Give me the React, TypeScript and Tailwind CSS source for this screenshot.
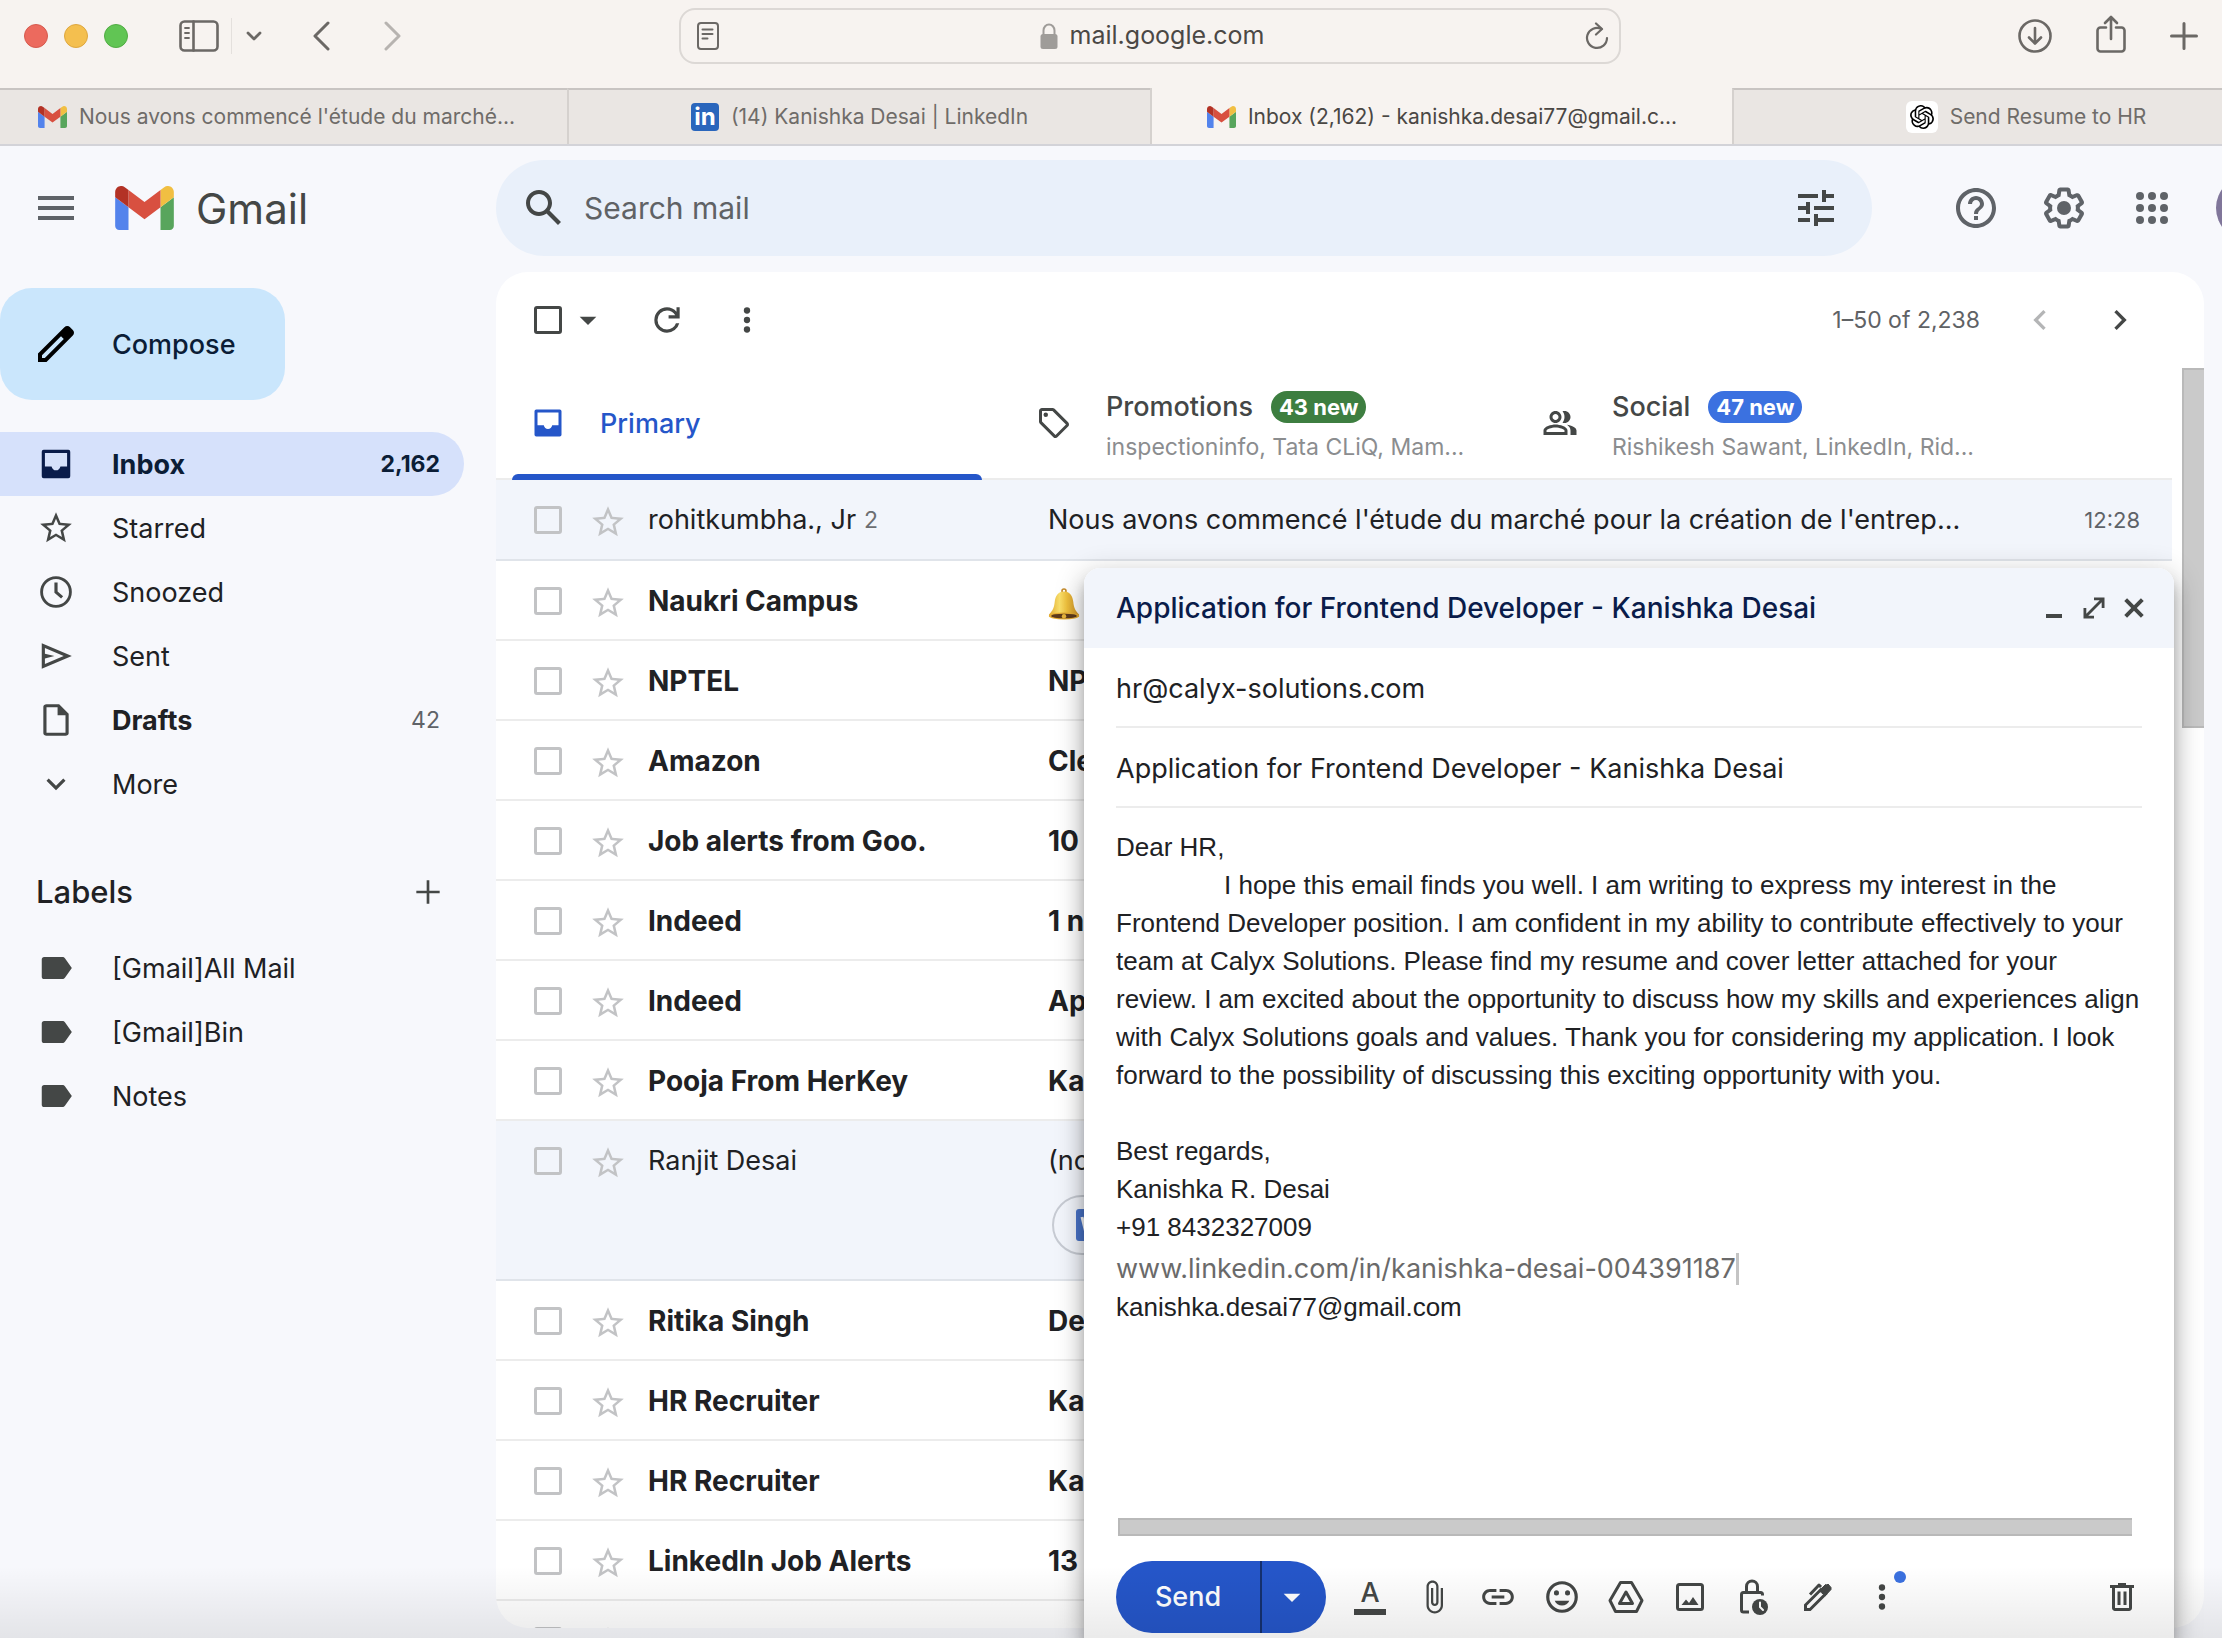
import type { ReactNode } from "react";
import { SiOpenai } from "react-icons/si";

/* ---------- icons ---------- */

function Glyph({ d, className, children }: { d?: string; className: string; children?: ReactNode }) {
  return (
    <svg viewBox="0 0 24 24" fill="currentColor" aria-hidden="true" className={`shrink-0 ${className}`}>
      {d && <path fillRule="evenodd" d={d} />}
      {children}
    </svg>
  );
}

const P = {
  menu: "M3 18h18v-2H3v2zm0-5h18v-2H3v2zm0-7v2h18V6H3z",
  search:
    "M20.49 19l-5.73-5.73C15.53 12.2 16 10.91 16 9.5 16 5.91 13.09 3 9.5 3S3 5.91 3 9.5 5.91 16 9.5 16c1.41 0 2.7-.47 3.77-1.24L19 20.49 20.49 19zM5 9.5C5 7.01 7.01 5 9.5 5S14 7.01 14 9.5 11.99 14 9.5 14 5 11.99 5 9.5z",
  tune: "M3 17v2h6v-2H3zM3 5v2h10V5H3zm10 16v-2h8v-2h-8v-2h-2v6h2zM7 9v2H3v2h4v2h2V9H7zm14 4v-2H11v2h10zm-6-4h2V7h4V5h-4V3h-2v6z",
  help: "M11 18h2v-2h-2v2zm1-16C6.48 2 2 6.48 2 12s4.48 10 10 10 10-4.48 10-10S17.52 2 12 2zm0 18c-4.41 0-8-3.59-8-8s3.59-8 8-8 8 3.59 8 8-3.59 8-8 8zm0-14c-2.21 0-4 1.79-4 4h2c0-1.1.9-2 2-2s2 .9 2 2c0 2-3 1.75-3 5h2c0-2.25 3-2.5 3-5 0-2.21-1.79-4-4-4z",
  gear: "M13.85 22.25h-3.7c-.74 0-1.36-.54-1.45-1.27l-.27-1.89c-.27-.14-.53-.29-.79-.46l-1.8.72c-.7.26-1.47-.03-1.81-.65L2.2 15.53c-.35-.66-.2-1.44.36-1.88l1.53-1.19c-.01-.15-.02-.3-.02-.46 0-.15.01-.31.02-.46l-1.52-1.19c-.59-.45-.74-1.26-.37-1.88l1.85-3.19c.34-.62 1.11-.9 1.79-.63l1.81.73c.26-.17.52-.32.78-.46l.27-1.91c.09-.7.71-1.25 1.44-1.25h3.7c.74 0 1.36.54 1.45 1.27l.27 1.89c.27.14.53.29.79.46l1.8-.72c.71-.26 1.48.03 1.82.65l1.84 3.18c.36.66.2 1.44-.36 1.88l-1.52 1.19c.01.15.02.3.02.46s-.01.31-.02.46l1.52 1.19c.56.45.72 1.23.37 1.86l-1.86 3.22c-.34.62-1.11.9-1.8.63l-1.8-.72c-.26.17-.52.32-.78.46l-.27 1.91c-.1.68-.72 1.22-1.46 1.22zm-3.23-2h2.76l.37-2.55.53-.22c.44-.18.88-.44 1.34-.78l.45-.34 2.38.96 1.38-2.4-2.03-1.58.07-.56c.03-.26.06-.51.06-.78s-.03-.53-.06-.78l-.07-.56 2.03-1.58-1.39-2.4-2.39.96-.45-.35c-.42-.32-.87-.58-1.33-.77l-.52-.22-.37-2.55h-2.76l-.37 2.55-.53.21c-.44.19-.88.44-1.34.79l-.45.33-2.38-.95-1.39 2.39 2.03 1.58-.07.56a7 7 0 0 0-.06.79c0 .26.02.53.06.78l.07.56-2.03 1.58 1.38 2.4 2.39-.96.45.35c.43.33.86.58 1.33.77l.53.22.38 2.55z",
  pencil:
    "M3 21v-4.25L16.2 3.58c.43-.4.96-.6 1.43-.58.54 0 1.05.2 1.4.6L20.4 5c.4.35.6.85.6 1.4s-.2 1-.6 1.4L7.25 21H3zm2-2h1.4l9.5-9.5-1.4-1.4L5 17.6V19z",
  inbox:
    "M4.2 3h15.6A1.2 1.2 0 0 1 21 4.2v15.6a1.2 1.2 0 0 1-1.2 1.2H4.2A1.2 1.2 0 0 1 3 19.8V4.2A1.2 1.2 0 0 1 4.2 3zM5 5v8.5h4.2c.3 1.5 1.4 2.5 2.8 2.5s2.5-1 2.8-2.5H19V5z",
  star: "M22 9.24l-7.19-.62L12 2 9.19 8.63 2 9.24l5.46 4.73L5.82 21 12 17.27 18.18 21l-1.63-7.03L22 9.24zM12 15.4l-3.76 2.27 1-4.28-3.32-2.88 4.38-.38L12 6.1l1.71 4.04 4.38.38-3.32 2.88 1 4.28L12 15.4z",
  clock:
    "M12 2a10 10 0 1 0 0 20 10 10 0 0 0 0-20zm0 1.8a8.2 8.2 0 1 1 0 16.4 8.2 8.2 0 0 1 0-16.4zM11 6v6.5l4.2 3.6 1.3-1.4-3.5-3V6z",
  sent: "M3 20V4l19 8-19 8zm2-3 11.85-5L5 7v3.5l6 1.5-6 1.5V17z",
  draft:
    "M14 2H6c-1.1 0-2 .7-2 1.6v16.8c0 .9.9 1.6 2 1.6h12c1.1 0 2-.7 2-1.6V8l-6-6zM6 20V4h7v5h5v11H6z",
  down: "M16.59 8.59L12 13.17 7.41 8.59 6 10l6 6 6-6z",
  label:
    "M17.63 5.84C17.27 5.33 16.67 5 16 5L4.5 5C3.6 5 3 5.6 3 6.5v11c0 .9.6 1.5 1.5 1.5L16 19c.67 0 1.27-.33 1.63-.84L22 12l-4.37-6.16z",
  add: "M19 12.8h-6.2V19h-1.6v-6.2H5v-1.6h6.2V5h1.6v6.2H19z",
  refresh:
    "M12 20q-3.35 0-5.675-2.325T4 12t2.325-5.675T12 4q1.725 0 3.3.713T18 6.75V4h2v7h-7V9h4.2q-.8-1.4-2.187-2.2T12 6Q9.5 6 7.75 7.75T6 12t1.75 4.25T12 18q1.925 0 3.475-1.1T17.65 14h2.1q-.7 2.65-2.85 4.325T12 20z",
  left: "M15.41 7.41L14 6l-6 6 6 6 1.41-1.41L10.83 12z",
  right: "M10 6L8.59 7.41 13.17 12l-4.58 4.59L10 18l6-6z",
  caret: "M7 10l5 5 5-5z",
  tag: "M21.41 11.58l-9-9C12.05 2.22 11.55 2 11 2H4c-1.1 0-2 .9-2 2v7c0 .55.22 1.05.59 1.42l9 9c.36.36.86.58 1.41.58s1.05-.22 1.41-.59l7-7c.37-.36.59-.86.59-1.41s-.23-1.06-.59-1.42zM13 20.01L4 11V4h7l9 8.99-7 7.02z",
  people:
    "M16.67 13.13C18.04 14.06 19 15.32 19 17v3h4v-3c0-2.18-3.57-3.47-6.33-3.87zM15 12c2.21 0 4-1.79 4-4s-1.79-4-4-4c-.47 0-.91.1-1.33.24C14.5 5.27 15 6.58 15 8s-.5 2.73-1.33 3.76c.42.14.86.24 1.33.24zM9 12c2.21 0 4-1.79 4-4s-1.79-4-4-4-4 1.79-4 4 1.79 4 4 4zm0-6c1.1 0 2 .9 2 2s-.9 2-2 2-2-.9-2-2 .9-2 2-2zM9 13c-2.67 0-8 1.34-8 4v3h16v-3c0-2.66-5.33-4-8-4zm6 5H3v-.99C3.2 16.29 6.3 15 9 15s5.8 1.29 6 2v1z",
  expand: "M3 21v-9h2.4v4.9L16.9 5.4H12V3h9v9h-2.4V7.1L7.1 18.6H12V21z",
  close: "M19.3 6.8 17.2 4.7 12 9.9 6.8 4.7 4.7 6.8 9.9 12 4.7 17.2 6.8 19.3 12 14.1 17.2 19.3 19.3 17.2 14.1 12z",
  clip: "M16.5 6v11.5c0 2.21-1.79 4-4 4s-4-1.79-4-4V5c0-1.38 1.12-2.5 2.5-2.5s2.5 1.12 2.5 2.5v10.5c0 .55-.45 1-1 1s-1-.45-1-1V6H10v9.5c0 1.38 1.12 2.5 2.5 2.5s2.5-1.12 2.5-2.5V5c0-2.21-1.79-4-4-4S7 2.79 7 5v12.5c0 3.04 2.46 5.5 5.5 5.5s5.5-2.46 5.5-5.5V6h-1.5z",
  link: "M3.9 12c0-1.71 1.39-3.1 3.1-3.1h4V7H7c-2.76 0-5 2.24-5 5s2.24 5 5 5h4v-1.9H7c-1.71 0-3.1-1.39-3.1-3.1zM8 13h8v-2H8v2zm9-6h-4v1.9h4c1.71 0 3.1 1.39 3.1 3.1s-1.39 3.1-3.1 3.1h-4V17h4c2.76 0 5-2.24 5-5s-2.24-5-5-5z",
  smile:
    "M12 2a10 10 0 1 0 0 20 10 10 0 0 0 0-20zm0 2a8 8 0 1 1 0 16 8 8 0 0 1 0-16zM12 17.3c2.1 0 3.9-1.2 4.6-3H7.4c.7 1.8 2.5 3 4.6 3zM8.5 7.8a1.6 1.6 0 1 0 0 3.2 1.6 1.6 0 0 0 0-3.2zM15.5 7.8a1.6 1.6 0 1 0 0 3.2 1.6 1.6 0 0 0 0-3.2z",
};

function MoreDots({ className }: { className: string }) {
  return (
    <Glyph className={className}>
      <circle cx="12" cy="6" r="2" />
      <circle cx="12" cy="12" r="2" />
      <circle cx="12" cy="18" r="2" />
    </Glyph>
  );
}

function GmailLogo({ className }: { className: string }) {
  return (
    <svg viewBox="52 42 88 66" aria-hidden="true" className={`shrink-0 ${className}`}>
      <path fill="#5383ec" d="M58 108h14V74L52 59v43c0 3.32 2.69 6 6 6" />
      <path fill="#58a55c" d="M120 108h14c3.32 0 6-2.69 6-6V59l-20 15" />
      <path fill="#f1bf42" d="M120 48v26l20-15v-8c0-7.42-8.47-11.65-14.4-7.2" />
      <path fill="#d85040" d="M72 74V48l24 18 24-18v26L96 92" />
      <path fill="#b33225" d="M52 51v8l20 15V48l-5.6-4.2c-5.94-4.45-14.4-.22-14.4 7.2" />
    </svg>
  );
}

function Line({ box, className, children, width = 2.6 }: { box: string; className: string; children: ReactNode; width?: number }) {
  return (
    <svg
      viewBox={box}
      fill="none"
      stroke="currentColor"
      strokeWidth={width}
      strokeLinecap="round"
      strokeLinejoin="round"
      aria-hidden="true"
      className={`shrink-0 ${className}`}
    >
      {children}
    </svg>
  );
}

function Bell() {
  return (
    <svg viewBox="0 0 32 32" aria-label="bell" className="mt-1.5 size-8">
      <defs>
        <linearGradient id="bell" x1="0" x2="1">
          <stop offset="0" stopColor="#e0a92f" />
          <stop offset="0.35" stopColor="#f9df6b" />
          <stop offset="0.6" stopColor="#efc03d" />
          <stop offset="1" stopColor="#cf9429" />
        </linearGradient>
      </defs>
      <circle cx="16" cy="3" r="2" fill="none" stroke="#c48a2a" strokeWidth="1.6" />
      <path d="M16 3.5c6 0 8.6 4.5 9.3 10.5.6 5.4 1.7 8.5 5.7 12.5v2H1v-2C5 22.5 6.1 19.4 6.7 14 7.4 8 10 3.5 16 3.5z" fill="url(#bell)" />
      <ellipse cx="16" cy="28" rx="15.2" ry="3.4" fill="#e6ae35" />
      <ellipse cx="16" cy="28" rx="12.8" ry="2.3" fill="#5d3b1c" />
      <circle cx="16" cy="28.2" r="2.2" fill="#e7b53c" />
    </svg>
  );
}

/* ---------- browser chrome ---------- */

function BrowserBar() {
  return (
    <div className="grid h-[88px] shrink-0 grid-cols-[679fr_942px_601fr] items-start bg-[#f7f3f0] text-[#6b6865]">
      <div className="flex items-center pl-6 pt-2">
        <div className="flex h-14 items-center gap-4">
          <span className="size-6 rounded-full border border-[#d65a4e] bg-[#ec6a5e]" />
          <span className="size-6 rounded-full border border-[#dea73f] bg-[#f4bf4f]" />
          <span className="size-6 rounded-full border border-[#51ac43] bg-[#61c554]" />
        </div>
        <button aria-label="Sidebar" className="ml-[51px]">
          <Line box="0 0 40 32" className="h-8 w-10">
            <rect x="1.5" y="1.5" width="37" height="29" rx="4" />
            <path d="M14.5 1.5v29" />
            <path d="M6 8h4M6 13h4M6 18h4" strokeWidth="1.8" />
          </Line>
        </button>
        <span className="ml-3 h-9 w-px bg-[#e4e0dd]" />
        <button aria-label="Tab groups" className="ml-3.5">
          <Line box="0 0 16 10" className="h-2.5 w-4" width={2.8}>
            <path d="M2 2l6 6 6-6" />
          </Line>
        </button>
        <button aria-label="Back" className="ml-[50px]">
          <Line box="0 0 18 30" className="h-[30px] w-[18px]" width={3}>
            <path d="M16 2L3 15l13 13" />
          </Line>
        </button>
        <button aria-label="Forward" className="ml-[54px] text-[#b7b3b0]">
          <Line box="0 0 18 30" className="h-[30px] w-[18px]" width={3}>
            <path d="M2 2l13 13L2 28" />
          </Line>
        </button>
      </div>
      <div className="mt-2 flex h-14 items-center rounded-2xl border-2 border-[#dcd8d5] pl-4 pr-2.5">
        <Line box="0 0 22 28" className="h-7 w-[22px]" width={2}>
          <rect x="1" y="1" width="20" height="26" rx="3" />
          <path d="M5.5 7.5h10M5.5 12h10M5.5 16.5h5" />
        </Line>
        <div className="flex flex-1 items-center justify-center gap-3">
          <svg viewBox="0 0 18 26" className="h-[26px] w-[18px]" aria-hidden="true">
            <path d="M3.5 13V7.5a5.5 6 0 0 1 11 0V13" fill="none" stroke="#9f9c99" strokeWidth="2" />
            <rect x="0.5" y="11" width="17" height="15" rx="2.5" fill="#9f9c99" />
          </svg>
          <span className="text-[25px] text-[#4b4845]">mail.google.com</span>
        </div>
        <button aria-label="Reload">
          <Line box="0 0 24 28" className="h-7 w-6" width={2.2}>
            <path d="M16.5 7A10 10 0 1 0 22 16" />
            <path d="M11 1.5l6 5.5-6 5.5" />
          </Line>
        </button>
      </div>
      <div className="flex h-16 items-center justify-end gap-11 pr-6 pt-2">
        <button aria-label="Downloads">
          <Line box="0 0 34 34" className="size-[34px]">
            <circle cx="17" cy="17" r="15.5" />
            <path d="M17 9v15M11 18.5l6 6 6-6" />
          </Line>
        </button>
        <button aria-label="Share" className="pb-1">
          <Line box="0 0 30 38" className="h-[38px] w-[30px]">
            <path d="M10 12.5H4.5a3 3 0 0 0-3 3v18a3 3 0 0 0 3 3h21a3 3 0 0 0 3-3v-18a3 3 0 0 0-3-3H20" />
            <path d="M15 24V2M9 8l6-6 6 6" />
          </Line>
        </button>
        <button aria-label="New tab">
          <Line box="0 0 28 28" className="size-7" width={3}>
            <path d="M14 1.5v25M1.5 14h25" />
          </Line>
        </button>
      </div>
    </div>
  );
}

function BrowserTab({ icon, title, active, className }: { icon: ReactNode; title: string; active?: boolean; className?: string }) {
  return (
    <button
      role="tab"
      aria-selected={!!active}
      className={`flex items-center justify-center gap-3 whitespace-nowrap border-l-2 border-[#d5d1ce] text-[21px] ${
        active ? "bg-[#f7f3f0] pt-0.5 text-[#4a4744]" : "border-t-2 border-t-[#c8c4c2] bg-[#eae6e3] text-[#6f6c69]"
      } ${className ?? ""}`}
    >
      {icon}
      {title}
    </button>
  );
}

function TabStrip() {
  return (
    <div role="tablist" className="grid h-[58px] shrink-0 grid-cols-[567fr_583fr_582fr_490fr] overflow-hidden border-b-2 border-[#d3d3d8]">
      <BrowserTab className="-ml-4" icon={<GmailLogo className="h-[22px] w-[29px]" />} title="Nous avons commencé l'étude du marché..." />
      <BrowserTab
        icon={
          <span className="flex size-7 items-center justify-center rounded-sm bg-[#2a66bc] text-2xl leading-none font-bold text-white">in</span>
        }
        title="(14) Kanishka Desai | LinkedIn"
      />
      <BrowserTab active icon={<GmailLogo className="h-[22px] w-[29px]" />} title="Inbox (2,162) - kanishka.desai77@gmail.c..." />
      <BrowserTab
        className="-mr-24"
        icon={
          <span className="flex size-8 items-center justify-center rounded-md bg-white text-black">
            <SiOpenai className="size-6" />
          </span>
        }
        title="Send Resume to HR"
      />
    </div>
  );
}

/* ---------- Gmail ---------- */

function Header() {
  return (
    <header className="flex h-[126px] shrink-0 items-start overflow-hidden pt-3.5 text-[#5f6368]">
      <div className="flex h-24 w-[496px] shrink-0 items-center pl-8">
        <button aria-label="Main menu">
          <Glyph d={P.menu} className="size-12" />
        </button>
        <a href="#home" className="ml-[35px] flex items-center gap-[22px] text-[42px] text-[#444746]">
          <GmailLogo className="h-11 w-[59px]" />
          Gmail
        </a>
      </div>
      <form role="search" className="flex h-24 flex-1 items-center rounded-full bg-[#e9f0fa] pl-6 pr-8 text-[#444746]">
        <button type="button" aria-label="Search">
          <Glyph d={P.search} className="size-12" />
        </button>
        <input
          type="text"
          aria-label="Search mail"
          placeholder="Search mail"
          className="ml-4 min-w-0 flex-1 bg-transparent text-[30px] outline-none placeholder:text-[#5f6265]"
        />
        <button type="button" aria-label="Search options">
          <Glyph d={P.tune} className="size-12" />
        </button>
      </form>
      <div className="flex h-24 w-[350px] shrink-0 items-center gap-10 pl-20">
        <button aria-label="Support">
          <Glyph d={P.help} className="size-12" />
        </button>
        <button aria-label="Settings">
          <Glyph d={P.gear} className="size-12">
            <circle cx="12" cy="12" r="3.5" />
          </Glyph>
        </button>
        <button aria-label="Google apps">
          <Glyph className="size-12">
            {[6, 12, 18].map((y) => [6, 12, 18].map((x) => <circle key={`${x}-${y}`} cx={x} cy={y} r="2" />))}
          </Glyph>
        </button>
        <button aria-label="Account" className="size-16 shrink-0 rounded-full bg-[#80769a]" />
      </div>
    </header>
  );
}

function NavItem({ icon, name, count, kind }: { icon: string; name: string; count?: string; kind?: "active" | "bold" }) {
  const tone =
    kind === "active"
      ? "bg-[#d6e1fb] text-[#0b1d36] font-bold text-[27px]"
      : kind === "bold"
        ? "font-bold text-[#202124] text-[27px]"
        : "text-[#202124] text-[27px]";
  return (
    <a href={`#${name}`} aria-current={kind === "active" ? "page" : undefined} className={`flex h-16 items-center rounded-r-full pl-[37px] pr-6 ${tone}`}>
      <Glyph d={icon} className={`size-[38px] ${kind === "active" ? "text-[#0a1c4a]" : "text-[#444746]"}`} />
      <span className="ml-[37px] flex-1 pt-0.5">{name}</span>
      {count && <span className={kind === "active" ? "text-[23px]" : "text-[23px] font-normal text-[#5f6368]"}>{count}</span>}
    </a>
  );
}

function Sidebar() {
  return (
    <nav className="w-[496px] shrink-0 pr-8 pt-4">
      <button className="flex h-28 w-[285px] items-center rounded-[32px] bg-[#cae6fc] pl-8 text-[27px] font-medium text-[#0b1d36]">
        <Glyph d={P.pencil} className="size-12 text-black" />
        <span className="ml-8 pt-0.5">Compose</span>
      </button>
      <div className="mt-8">
        <NavItem icon={P.inbox} name="Inbox" count="2,162" kind="active" />
        <NavItem icon={P.star} name="Starred" />
        <NavItem icon={P.clock} name="Snoozed" />
        <NavItem icon={P.sent} name="Sent" />
        <NavItem icon={P.draft} name="Drafts" count="42" kind="bold" />
        <NavItem icon={P.down} name="More" />
      </div>
      <div className="mt-8 flex h-[88px] items-center justify-between pl-9 pr-4">
        <h2 className="text-[31px] font-medium text-[#202124]">Labels</h2>
        <button aria-label="Create new label" className="text-[#444746]">
          <Glyph d={P.add} className="size-10" />
        </button>
      </div>
      <NavItem icon={P.label} name="[Gmail]All Mail" />
      <NavItem icon={P.label} name="[Gmail]Bin" />
      <NavItem icon={P.label} name="Notes" />
    </nav>
  );
}

function ListToolbar() {
  return (
    <div className="flex h-24 shrink-0 items-center pl-[38px] pr-16 text-[#444746]">
      <input type="checkbox" aria-label="Select all" className="size-7 appearance-none rounded-[3px] border-3 border-[#444746]" />
      <button aria-label="Select menu" className="ml-1.5">
        <Glyph d={P.caret} className="size-10" />
      </button>
      <button aria-label="Refresh" className="ml-10">
        <Glyph d={P.refresh} className="size-[38px]" />
      </button>
      <button aria-label="More" className="ml-[42px]">
        <MoreDots className="size-[38px]" />
      </button>
      <span className="ml-auto text-[23px] text-[#5f6265]">1–50 of 2,238</span>
      <button aria-label="Newer" disabled className="ml-10 text-[#b4b5b6]">
        <Glyph d={P.left} className="size-10" />
      </button>
      <button aria-label="Older" className="ml-10">
        <Glyph d={P.right} className="size-10" />
      </button>
    </div>
  );
}

function CategoryTab({ icon, name, badge, tone, senders }: { icon: ReactNode; name: string; badge: string; tone: string; senders: string }) {
  return (
    <button role="tab" aria-selected="false" className="flex h-full w-[506px] items-center pl-9 text-left text-[#444746]">
      {icon}
      <span className="ml-9 pt-2">
        <span className="flex h-10 items-center gap-[18px] text-[27px] font-medium">
          {name}
          <span className={`flex h-8 items-center rounded-full px-2 text-[22px] font-bold text-white ${tone}`}>{badge}</span>
        </span>
        <span className="block text-[23px] leading-10 text-[#8b8d8f]">{senders}</span>
      </span>
    </button>
  );
}

type Mail = { from: string; subject: ReactNode; read?: boolean; count?: string; time?: string; attachment?: boolean };

const mails: Mail[] = [
  { from: "rohitkumbha., Jr", count: "2", subject: "Nous avons commencé l'étude du marché pour la création de l'entrep...", read: true, time: "12:28" },
  { from: "Naukri Campus", subject: <Bell /> },
  { from: "NPTEL", subject: "NP" },
  { from: "Amazon", subject: "Cle" },
  { from: "Job alerts from Goo.", subject: "10" },
  { from: "Indeed", subject: "1 n" },
  { from: "Indeed", subject: "Ap" },
  { from: "Pooja From HerKey", subject: "Ka" },
  { from: "Ranjit Desai", subject: "(no", read: true, attachment: true },
  { from: "Ritika Singh", subject: "De" },
  { from: "HR Recruiter", subject: "Ka" },
  { from: "HR Recruiter", subject: "Ka" },
  { from: "LinkedIn Job Alerts", subject: "13" },
  { from: "", subject: "" },
];

function MailRow({ mail }: { mail: Mail }) {
  const text = mail.read ? "text-[27px]" : "text-[28px] font-bold";
  return (
    <tr className={`border-b-2 align-top ${mail.attachment ? "h-40" : "h-20"} ${mail.read ? "border-[#e0e4ea] bg-[#f2f5fb]" : "border-[#ececec]"}`}>
      <td className="p-0">
        <div className="flex h-[78px] items-center pl-[38px] pt-0.5">
          <input type="checkbox" aria-label={`Select ${mail.from}`} className="size-7 appearance-none rounded-[3px] border-3 border-[#c2c3c5]" />
          <button aria-label="Star" className="ml-[27px] pt-1 text-[#c2c3c5]">
            <Glyph d={P.star} className="size-[38px]" />
          </button>
        </div>
      </td>
      <td className={`p-0 ${text}`}>
        <div className="flex h-[78px] items-center gap-2 whitespace-nowrap pt-0.5">
          {mail.from}
          {mail.count && <span className="text-[23px] text-[#6c6e71]">{mail.count}</span>}
        </div>
      </td>
      <td className={`overflow-hidden p-0 ${text}`}>
        <div className="flex h-[78px] items-center whitespace-nowrap pt-0.5">{mail.subject}</div>
        {mail.attachment && (
          <div className="ml-1 -mt-1 flex h-[60px] w-64 items-center rounded-full border-2 border-[#c7cbd3] pl-[22px]">
            <svg viewBox="0 0 32 32" className="size-8" aria-label="Word document">
              <rect width="32" height="32" rx="3" fill="#4a74c9" />
              <path d="M6 8l4 16 6-13 6 13 4-16" fill="none" stroke="#fff" strokeWidth="3" />
            </svg>
          </div>
        )}
      </td>
      <td className="p-0 pr-8">
        <div className="flex h-[78px] items-center justify-end pt-0.5 text-[22px] text-[#5f6368]">{mail.time}</div>
      </td>
    </tr>
  );
}

function MailPanel() {
  return (
    <main className="mb-2.5 mr-[18px] flex min-w-0 flex-1 flex-col overflow-hidden rounded-[32px] bg-white">
      <ListToolbar />
      <div className="flex min-h-0 flex-1">
        <div className="min-w-0 flex-1 overflow-hidden">
          <div role="tablist" className="flex h-28 items-center border-b-2 border-[#ececec]">
            <button role="tab" aria-selected="true" className="relative flex h-[110px] w-[506px] items-center pl-9 text-[27px] font-medium text-[#2556c9]">
              <Glyph d={P.inbox} className="-mx-0.5 size-9" />
              <span className="ml-9 pt-0.5">Primary</span>
              <span className="absolute -bottom-0.5 left-4 right-5 h-1.5 rounded-t-md bg-[#2556c9]" />
            </button>
            <CategoryTab
              icon={
                <Glyph d={P.tag} className="-mx-0.5 size-9">
                  <circle cx="6.5" cy="6.5" r="1.5" />
                </Glyph>
              }
              name="Promotions"
              badge="43 new"
              tone="bg-[#3d7e40]"
              senders="inspectioninfo, Tata CLiQ, Mam..."
            />
            <CategoryTab
              icon={<Glyph d={P.people} className="-mx-0.5 size-9" />}
              name="Social"
              badge="47 new"
              tone="bg-[#3b71e0]"
              senders="Rishikesh Sawant, LinkedIn, Rid..."
            />
          </div>
          <table className="w-full table-fixed border-collapse text-[#202124]">
            <colgroup>
              <col className="w-[152px]" />
              <col className="w-[400px]" />
              <col />
              <col className="w-40" />
            </colgroup>
            <tbody>
              {mails.map((mail, i) => (
                <MailRow key={i} mail={mail} />
              ))}
            </tbody>
          </table>
        </div>
        <div className="w-8 shrink-0 pl-2.5">
          <div className="h-[360px] border-2 border-r-0 border-[#b9b9b9] bg-[#cacaca]" />
        </div>
      </div>
    </main>
  );
}

function Tool({ label, children }: { label: string; children: ReactNode }) {
  return (
    <button aria-label={label} className="relative flex h-16 w-16 items-center justify-center">
      {children}
    </button>
  );
}

function ComposeWindow() {
  return (
    <section
      aria-label="New message"
      className="absolute bottom-0 right-12 top-[296px] flex w-[1090px] flex-col rounded-t-2xl bg-white shadow-[0_16px_20px_2px_rgba(0,0,0,0.14),0_6px_28px_4px_rgba(0,0,0,0.16),0_10px_12px_-2px_rgba(0,0,0,0.2)]"
    >
      <header className="flex h-20 shrink-0 items-center rounded-t-2xl bg-[#f2f5fb] pl-8 pr-5 text-[#444746]">
        <h2 className="flex-1 text-[28px] font-medium text-[#0a1c4a]">Application for Frontend Developer - Kanishka Desai</h2>
        <button aria-label="Minimise" className="flex size-10 items-end justify-center pb-2.5">
          <span className="h-1 w-4 bg-[#444746]" />
        </button>
        <button aria-label="Full screen" className="flex size-10 items-center justify-center">
          <Glyph d={P.expand} className="size-7" />
        </button>
        <button aria-label="Close" className="flex size-10 items-center justify-center">
          <Glyph d={P.close} className="size-8" />
        </button>
      </header>
      <div className="flex min-h-0 flex-1 flex-col px-8 text-[#202124]">
        <input
          aria-label="To"
          type="text"
          defaultValue="hr@calyx-solutions.com"
          className="h-20 shrink-0 border-b-2 border-[#ececec] pt-0.5 text-[27px] outline-none"
        />
        <input
          aria-label="Subject"
          type="text"
          defaultValue="Application for Frontend Developer - Kanishka Desai"
          className="h-20 shrink-0 border-b-2 border-[#ececec] pt-0.5 text-[27px] outline-none"
        />
        <div
          role="textbox"
          aria-multiline="true"
          aria-label="Message body"
          contentEditable
          suppressContentEditableWarning
          spellCheck={false}
          className="min-h-0 flex-1 overflow-hidden pt-5 font-['Liberation_Sans',Arial,sans-serif] text-[26px] leading-[38px] outline-none"
        >
          <p>Dear HR,</p>
          <p className="indent-[108px]">
            I hope this email finds you well. I am writing to express my interest in the Frontend Developer position. I am confident in my
            ability to contribute effectively to your team at Calyx Solutions. Please find my resume and cover letter attached for your
            review. I am excited about the opportunity to discuss how my skills and experiences align with Calyx Solutions goals and values.
            Thank you for considering my application. I look forward to the possibility of discussing this exciting opportunity with you.
          </p>
          <p className="mt-[38px]">Best regards,</p>
          <p>Kanishka R. Desai</p>
          <p>+91 8432327009</p>
          <p className="flex h-[42px] items-center pt-1 font-['Inter',sans-serif] text-[27px] text-[#6a6a6a]">
            www.linkedin.com/in/kanishka-desai-004391187
            <span className="h-8 w-[3px] bg-[#c4c4c4]" />
          </p>
          <p>kanishka.desai77@gmail.com</p>
        </div>
        <div className="ml-0.5 mr-2.5 h-[18px] shrink-0 border-2 border-r-0 border-[#b9b9b9] bg-[#cacaca]" />
      </div>
      <footer className="flex h-[102px] shrink-0 items-center pb-[5px] pl-8 pr-5 pt-[25px] text-[#444746]">
        <div className="flex h-[72px] shrink-0 overflow-hidden rounded-full bg-[#2556c9] text-white">
          <button className="w-[146px] border-r-2 border-[#14306e] text-[27px] font-medium">Send</button>
          <button aria-label="More send options" className="flex w-16 items-center pl-2.5">
            <Glyph d={P.caret} className="size-10" />
          </button>
        </div>
        <div className="ml-3 flex flex-1 items-center">
          <Tool label="Formatting options">
            <span className="flex h-9 w-8 flex-col items-center justify-between border-b-6 border-[#444746] text-[27px] leading-7 font-medium">A</span>
          </Tool>
          <Tool label="Attach files">
            <Glyph d={P.clip} className="size-9" />
          </Tool>
          <Tool label="Insert link">
            <Glyph d={P.link} className="size-[38px]" />
          </Tool>
          <Tool label="Insert emoji">
            <Glyph d={P.smile} className="size-[38px]" />
          </Tool>
          <Tool label="Insert files using Drive">
            <Line box="0 0 36 32" className="h-8 w-9" width={3}>
              <path d="M12.5 1.5h11L34 19.5l-5.5 11h-21L2 19.5z" />
              <path d="M18 11l6.5 11.5h-13z" />
            </Line>
          </Tool>
          <Tool label="Insert photo">
            <Line box="0 0 28 28" className="size-7" width={3}>
              <rect x="1.5" y="1.5" width="25" height="25" rx="2" />
              <path d="M5.5 22l4.5-5.5 3 3.5 4-6 5.5 8z" fill="currentColor" stroke="none" />
            </Line>
          </Tool>
          <Tool label="Confidential mode">
            <Line box="0 0 28 36" className="h-9 w-7" width={3}>
              <path d="M6.5 13V7.5a5.5 5.5 0 0 1 11 0V13M22.5 16.5v-1a2 2 0 0 0-2-2h-17a2 2 0 0 0-2 2V31a2 2 0 0 0 2 2H9" strokeLinecap="butt" />
              <circle cx="20" cy="28" r="8" fill="currentColor" stroke="none" />
              <path d="M20 23.5V28l3 3" stroke="#fff" strokeWidth="2" />
            </Line>
          </Tool>
          <Tool label="Insert signature">
            <Line box="0 0 28 28" className="size-7" width={3}>
              <path d="M1.5 26.5v-4.5L17 6.5l4.5 4.5L6 26.5z" strokeLinejoin="miter" />
              <path d="M15.5 7.5l6-6 1.5.5 1-1 3 3.5v2L21.5 12.5z" fill="currentColor" strokeWidth="1" />
              <path d="M6 11.5l9-9.5 2 2" strokeLinecap="butt" />
            </Line>
          </Tool>
          <Tool label="More options">
            <MoreDots className="size-[38px]" />
            <span className="absolute right-2 top-1.5 size-3 rounded-full bg-[#3b71e0]" />
          </Tool>
          <span className="flex-1" />
          <Tool label="Discard draft">
            <Line box="0 0 24 28" className="h-7 w-6" width={3}>
              <path d="M0 3.5h24M8 1.5h8" strokeLinecap="butt" />
              <path d="M3.5 4v21a1.5 1.5 0 0 0 1.5 1.5h14a1.5 1.5 0 0 0 1.5-1.5V4M9 8.5v13.5M15 8.5v13.5" strokeLinecap="butt" />
            </Line>
          </Tool>
        </div>
      </footer>
    </section>
  );
}

export default function App() {
  return (
    <div className="relative flex h-screen flex-col overflow-hidden bg-[#f7f8fc] font-['Inter',sans-serif]">
      <BrowserBar />
      <TabStrip />
      <Header />
      <div className="relative flex min-h-0 flex-1">
        <Sidebar />
        <MailPanel />
        <ComposeWindow />
      </div>
      <div className="pointer-events-none absolute inset-x-0 bottom-0 h-18 bg-linear-to-b from-transparent to-black/8" />
    </div>
  );
}
